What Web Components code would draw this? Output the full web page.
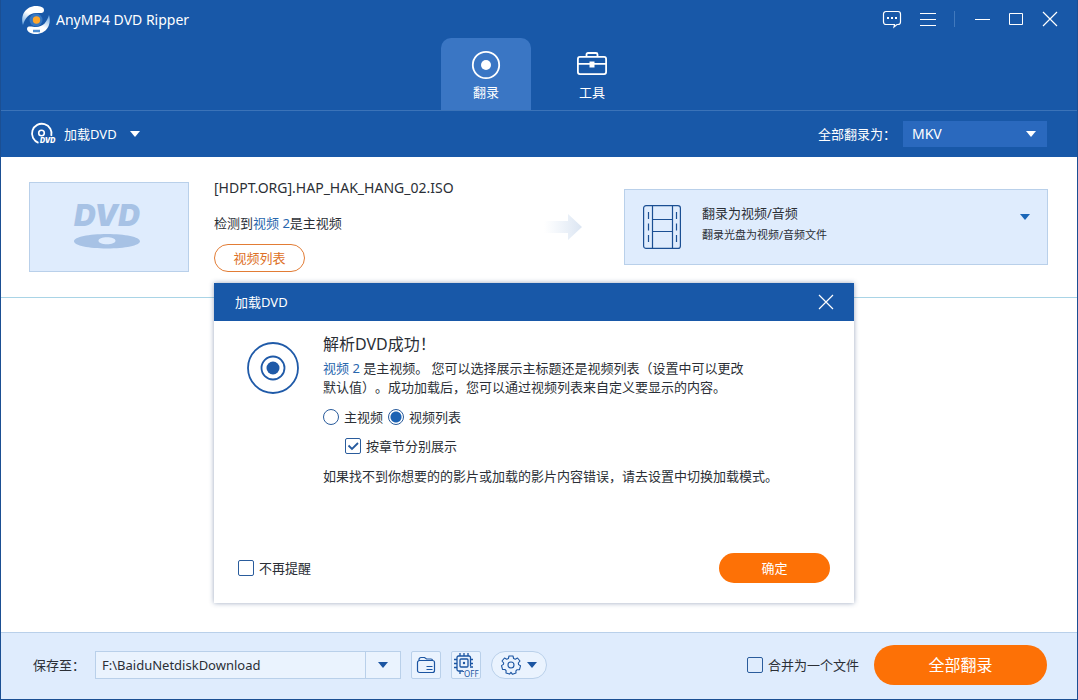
<!DOCTYPE html>
<html lang="zh-CN">
<head>
<meta charset="utf-8">
<meta name="viewport" content="width=device-width, initial-scale=1">
<title>AnyMP4 DVD Ripper</title>
<style>
  :root {
    --brand: #1858a8;
    --ink: #2b2f36;
    --link: #2866ae;
    --accent: #fd7106;
    --panel: #dfecfd;
    --line: #b9d0ea;
  }
  body {
    margin: 0;
    color: var(--ink);
    font: 13px/20px "Noto Sans", "Noto Sans CJK SC", sans-serif;
    text-spacing-trim: space-all;
  }
</style>
</head>
<body>
<app-window></app-window>
<script>
const base = `
  *, *::before, *::after { box-sizing: border-box; }
  :host { box-sizing: border-box; }
  button, input, select { font: inherit; color: inherit; margin: 0; }
  button { padding: 0; border: 0; background: none; display: grid; place-items: center; cursor: pointer; }
  svg { display: block; }
`;

function define(name, css, html) {
  const template = document.createElement('template');
  template.innerHTML = `<style>${base}${css}</style>${html}`;
  customElements.define(name, class extends HTMLElement {
    constructor() {
      super();
      this.attachShadow({ mode: 'open' }).append(template.content.cloneNode(true));
    }
  });
}

const icons = {
  logo: [28, 28, `
    <defs><linearGradient id="a" x1="0" y1="1" x2=".6" y2="0"><stop offset="0" stop-color="#5f9fdf"/><stop offset=".6" stop-color="#fff"/></linearGradient>
    <linearGradient id="b" x1="1" y1="0" x2=".4" y2="1"><stop offset="0" stop-color="#5f9fdf"/><stop offset=".6" stop-color="#fff"/></linearGradient></defs>
    <path d="M1 19C-2 9 4 0 14 0c4 0 8 1 8 4 0 4-4 3-8 3-7 0-11 5-13 12z" fill="url(#a)"/>
    <path d="M27 9c3 10-3 19-13 19-4 0-9-2-9-5 0-4 5-2 9-2 7 0 11-5 13-12z" fill="url(#b)"/>
    <circle cx="14" cy="14" r="6.500" fill="#3677c2"/><circle cx="14.500" cy="14" r="3.700" fill="#ffa62b"/>
    <path d="M11 25h7" stroke="#4c8dd2" stroke-width="2.500"/>`],
  chat: [20, 18, `<path d="M4 1.500h12a2.500 2.500 0 0 1 2.500 2.500v8a2.500 2.500 0 0 1-2.500 2.500h-1l-3 2.500.500-2.500H4A2.500 2.500 0 0 1 1.500 12V4A2.500 2.500 0 0 1 4 1.500z" fill="none" stroke="currentColor" stroke-width="1.200"/><path d="M5 7h2v2H5zm4 0h2v2H9zm4 0h2v2h-2z" fill="currentColor"/>`],
  menu: [16, 14, `<path d="M0 1.500h16M0 7.500h16M0 13.500h16" stroke="currentColor"/>`],
  min: [16, 16, `<path d="M1 8.500h15" stroke="currentColor"/>`],
  max: [16, 16, `<path d="M1.500 2.500h13v11h-13z" fill="none" stroke="currentColor"/>`],
  close: [16, 16, `<path d="M1 1l14 14M15 1L1 15" stroke="currentColor" stroke-width="1.200"/>`],
  ring: [30, 30, `<circle cx="15" cy="15" r="13.200" fill="none" stroke="currentColor" stroke-width="1.800"/><circle cx="15" cy="15" r="5" fill="currentColor"/>`],
  toolbox: [30, 30, `<g fill="none" stroke="currentColor" stroke-width="1.800"><rect x=".9" y="6.900" width="28.200" height="17.200" rx="2"/><path d="M9.500 6.500v-2a1.500 1.500 0 0 1 1.500-1.500h8a1.500 1.500 0 0 1 1.500 1.500v2M1 13.800h28"/></g><path d="M12.500 11.500h5v6h-5z" fill="currentColor"/>`],
  disc: [30, 24, `<path d="M21.300 14A9.800 9.800 0 1 0 8.500 20.800" fill="none" stroke="currentColor" stroke-width="1.800"/><circle cx="11.500" cy="11" r="2.800" fill="none" stroke="currentColor" stroke-width="1.600"/><text x="10" y="21" fill="currentColor" font-size="7" font-weight="900" font-style="italic" font-family="Inter, sans-serif">DVD</text>`],
  down: [10, 6, `<path d="M0 0h10L5 6z" fill="currentColor"/>`],
  cover: [76, 66, `<text x="3" y="32" fill="currentColor" font-size="30" font-weight="900" font-style="italic" font-family="Inter, sans-serif">DVD</text><path fill-rule="evenodd" d="M36 40c18 0 33 3 33 7.300S54 54.500 36 54.500 3 51.600 3 47.300 18 40 36 40zm0 3.200c-4.700 0-8.500 1.500-8.500 3.500s3.800 3.500 8.500 3.500 8.500-1.500 8.500-3.500-3.800-3.500-8.500-3.500z" fill="currentColor"/>`],
  arrow: [40, 28, `<defs><linearGradient id="g"><stop offset="0" stop-color="#dfe9f5" stop-opacity="0"/><stop offset="1" stop-color="#dbe5f2"/></linearGradient></defs><path d="M0 8h24V1l14 13-14 13v-7H0z" fill="url(#g)"/>`],
  film: [38, 44, `<g fill="none" stroke="currentColor" stroke-width="1.200"><rect x=".6" y=".6" width="36.800" height="42.800" rx="2.500"/><path d="M9.500 0v44M29.500 0v44M9.500 14.500h20M9.500 26.500h20"/><path d="M5.500 7v31M33.500 7v31" stroke-dasharray="7 4.500"/></g>`],
  success: [52, 52, `<g fill="none" stroke="currentColor" stroke-width="1.800"><circle cx="26" cy="26" r="25"/><circle cx="26" cy="26" r="11.500"/></g><circle cx="26" cy="26" r="6.500" fill="currentColor"/>`],
  folder: [20, 18, `<g fill="none" stroke="currentColor" stroke-width="1.200"><path d="M3.500 4.500h13a2 2 0 0 1 2 2v8a2 2 0 0 1-2 2h-13a2 2 0 0 1-2-2v-8a2 2 0 0 1 2-2zM3 4.500v-1a2 2 0 0 1 2-2h3.500l2 1.500H15a1.500 1.500 0 0 1 1.500 1.500M10.500 10.500h6M10.500 13.500h6"/></g>`],
  chip: [28, 26, `<g fill="none" stroke="currentColor" stroke-width="1.300"><path d="M18.500 14V5.500a1.500 1.500 0 0 0-1.500-1.500H6.500A1.500 1.500 0 0 0 5 5.500v12A1.500 1.500 0 0 0 6.500 19H11"/><rect x="8" y="7" width="8" height="8" rx="1"/><path d="M8 4V1M12 4V1M16 4V1M5 7.500H2M5 11.500H2M5 15.500H2M18 7.500h3M18 11.500h3M18 15h3M8 19v3M11.500 19v1"/></g><circle cx="12" cy="11" r="1.200" fill="currentColor"/><text x="12" y="25" fill="currentColor" font-size="8" font-family="Noto Sans, sans-serif">OFF</text>`],
  gear: [20, 20, `<g fill="none" stroke="currentColor" stroke-width="1.100"><path stroke-linejoin="round" d="M8 1h4l.6 2.500 1.700.7L16.500 3 19 6l-1.700 2 .3 1.600 1.900 1.200-1 3.800-2.400.1-1.200 1.200.1 2.200-3.500 1.200L10 17.300 8.500 19.100 5 17.900l.1-2.200-1.200-1.200-2.400-.1-1-3.800 1.900-1.200L2.700 8 1 6l2.500-3 2.200 1.200 1.700-.7z"/><circle cx="10" cy="10" r="3"/></g>`]
};

customElements.define('ui-icon', class extends HTMLElement {
  constructor() {
    super();
    this.attachShadow({ mode: 'open' });
  }
  connectedCallback() {
    const [w, h, body] = icons[this.getAttribute('name')];
    this.shadowRoot.innerHTML = `<style>:host{display:block;flex:none}svg{display:block;overflow:visible}</style>
      <svg width="${w}" height="${h}" viewBox="0 0 ${w} ${h}" aria-hidden="true">${body}</svg>`;
  }
});

define('title-bar', `
  :host { display: flex; align-items: center; height: 38px; padding: 0 19px 0 21px; color: #fff; }
  ui-icon[name=logo] { margin-top: 2px; }
  h1 { margin: 2px auto 0 6px; font-size: 14px; font-weight: 400; }
  .group { display: flex; align-items: center; gap: 18px; }
  .window { border-left: 1px solid #4179bd; margin-left: 18px; padding-left: 19px; height: 16px; }
`, `
  <ui-icon name="logo"></ui-icon>
  <h1>AnyMP4 DVD Ripper</h1>
  <div class="group">
    <button aria-label="反馈"><ui-icon name="chat"></ui-icon></button>
    <button aria-label="菜单"><ui-icon name="menu"></ui-icon></button>
  </div>
  <div class="group window">
    <button aria-label="最小化"><ui-icon name="min"></ui-icon></button>
    <button aria-label="最大化"><ui-icon name="max"></ui-icon></button>
    <button aria-label="关闭"><ui-icon name="close"></ui-icon></button>
  </div>
`);

define('nav-tab', `
  :host { display: block; width: 90px; height: 72px; border-radius: 10px 10px 0 0; color: #fff; }
  :host([selected]) { background: #3a76c4; }
  button { width: 100%; height: 100%; align-content: start; gap: 2px; padding-top: 12px; }
`, `<button><slot name="icon"></slot><slot></slot></button>`);

define('tool-bar', `
  :host { display: flex; align-items: center; height: 47px; padding: 0 30px 0 29px; border-top: 1px solid #3b73b8; color: #fff; }
  .load { display: flex; align-items: center; gap: 4px; margin-right: auto; }
  .load .caret { margin-left: 9px; }
  label { margin-right: 7px; }
  .select { display: grid; align-items: center; width: 144px; height: 26px; background: #2a69be; }
  .select > * { grid-area: 1 / 1; }
  select { appearance: none; width: 100%; height: 26px; padding: 0 9px; border: 0; background: none; font-size: 14px; }
  option { color: #222; }
  .select ui-icon { justify-self: end; margin-right: 11px; pointer-events: none; }
`, `
  <button class="load"><ui-icon name="disc"></ui-icon>加载DVD<ui-icon class="caret" name="down"></ui-icon></button>
  <label for="format">全部翻录为：</label>
  <div class="select">
    <select id="format"><option>MKV</option></select>
    <ui-icon name="down"></ui-icon>
  </div>
`);

define('disc-row', `
  :host { display: grid; grid-template-columns: 160px minmax(0, 1fr) 40px 464px; align-items: start;
    min-height: 141px; padding: 0 29px 0 28px; border-bottom: 1px solid #a9d4e6; }
  .cover { display: grid; place-items: center; height: 90px; margin-top: 25px; background: var(--panel);
    border: 1px solid var(--line); color: #a7c2e5; }
  .info { padding: 21px 0 0 25px; }
  .info p { margin: 0 0 15px; white-space: nowrap; }
  .info .name { font-size: 14px; }
  .info .found { margin-bottom: 11px; }
  a { color: var(--link); text-decoration: none; }
  .list { width: 91px; height: 28px; border: 1px solid #e27c35; border-radius: 14px; color: #dd6f26; background: #fff; }
  .arrow { margin-top: 56px; }
  .card { display: flex; align-items: flex-start; height: 76px; margin: 32px 0 0 40px; padding: 15px 17px 0 18px;
    text-align: left; background: var(--panel); border: 1px solid var(--line); color: var(--ink); }
  .card ui-icon[name=film] { color: #1b4f93; }
  .text { display: grid; gap: 2px; margin: -2px auto 0 21px; }
  .text small { font-size: 11px; }
  .card ui-icon[name=down] { margin-top: 9px; color: #1a66b8; }
`, `
  <div class="cover"><ui-icon name="cover"></ui-icon></div>
  <div class="info">
    <p class="name">[HDPT.ORG].HAP_HAK_HANG_02.ISO</p>
    <p class="found">检测到<a href="#main-title">视频 2</a>是主视频</p>
    <button class="list">视频列表</button>
  </div>
  <ui-icon class="arrow" name="arrow"></ui-icon>
  <button class="card">
    <ui-icon name="film"></ui-icon>
    <span class="text"><span>翻录为视频/音频</span><small>翻录光盘为视频/音频文件</small></span>
    <ui-icon name="down"></ui-icon>
  </button>
`);

const choice = `
  label { display: flex; align-items: center; gap: 5px; }
  input[type=checkbox], input[type=radio] { appearance: none; flex: none; width: 16px; height: 16px; border: 1px solid #2a5c9c; border-radius: 2px; }
  input[type=radio] { border-radius: 50%; }
  input[type=radio]:checked { background: radial-gradient(circle, #1c62b3 5px, transparent 6px); }
  input[type=checkbox]:checked { background: url("data:image/svg+xml,%3Csvg xmlns='http://www.w3.org/2000/svg' width='14' height='14'%3E%3Cpath d='M2.500 6.500l3.500 3.500 6-6' fill='none' stroke='%23255a9e' stroke-width='1.800'/%3E%3C/svg%3E") center no-repeat; }
`;

define('load-dialog', `${choice}
  :host { display: flex; flex-direction: column; width: 640px; min-height: 320px; background: #fff; box-shadow: 0 0 5px rgba(30, 60, 110, .45); }
  header { display: flex; align-items: center; justify-content: space-between; height: 38px; padding: 0 20px 0 21px; background: var(--brand); color: #fff; }
  h2, h3 { margin: 0; font-weight: 400; }
  h2 { font-size: 13px; }
  h3 { font-size: 16px; line-height: 22px; }
  .body { display: flex; gap: 24px; padding: 12px 33px 0; }
  .body > ui-icon { margin-top: 9px; color: #1f5aa8; }
  p { margin: 10px 0 0; white-space: nowrap; }
  .lead { margin-top: 4px; line-height: 19px; }
  a { color: var(--link); text-decoration: none; }
  .choices { display: flex; gap: 5px; margin-top: 10px; }
  .chapters { margin: 9px 0 0 22px; }
  footer { display: flex; align-items: center; justify-content: space-between; margin-top: auto; padding: 0 24px 20px; }
  .ok { width: 111px; height: 30px; border-radius: 15px; background: var(--accent); color: #fff; }
`, `
  <header><h2>加载DVD</h2><button aria-label="关闭"><ui-icon name="close"></ui-icon></button></header>
  <div class="body">
    <ui-icon name="success"></ui-icon>
    <div>
      <h3>解析DVD成功！</h3>
      <p class="lead"><a href="#main-title">视频 2</a> 是主视频。 您可以选择展示主标题还是视频列表（设置中可以更改<br>默认值）。成功加载后，您可以通过视频列表来自定义要显示的内容。</p>
      <div class="choices">
        <label><input type="radio" name="mode">主视频</label>
        <label><input type="radio" name="mode" checked>视频列表</label>
      </div>
      <label class="chapters"><input type="checkbox" checked>按章节分别展示</label>
      <p>如果找不到你想要的的影片或加载的影片内容错误，请去设置中切换加载模式。</p>
    </div>
  </div>
  <footer>
    <label><input type="checkbox">不再提醒</label>
    <button class="ok">确定</button>
  </footer>
`);

define('save-bar', `${choice}
  :host { display: flex; align-items: center; gap: 10px; height: 67px; padding: 0 30px 2px 32px; background: var(--panel); border-top: 1px solid var(--line); }
  .path { display: flex; width: 306px; height: 28px; border: 1px solid var(--line); background: #eaf3fe; }
  .path input { flex: 1; min-width: 0; padding: 0 6px; border: 0; background: none; }
  .path button { width: 35px; border-left: 1px solid var(--line); }
  button { color: #1b55a2; }
  .tool { width: 30px; height: 28px; border: 1px solid var(--line); border-radius: 2px; background: #eaf3fe; }
  .pill { display: flex; align-items: center; justify-content: center; gap: 6px; width: 56px; height: 28px; border: 1px solid var(--line); border-radius: 14px; background: #eaf3fe; }
  .merge { margin: 0 5px 0 auto; }
  .go { width: 173px; height: 40px; border-radius: 20px; background: var(--accent); color: #fff; font-size: 16px; }
`, `
  <label for="path">保存至：</label>
  <div class="path"><input id="path" type="text" value="F:\\BaiduNetdiskDownload"><button aria-label="选择路径"><ui-icon name="down"></ui-icon></button></div>
  <button class="tool" aria-label="打开文件夹"><ui-icon name="folder"></ui-icon></button>
  <button class="tool" aria-label="硬件加速"><ui-icon name="chip"></ui-icon></button>
  <button class="pill" aria-label="设置"><ui-icon name="gear"></ui-icon><ui-icon name="down"></ui-icon></button>
  <label class="merge"><input type="checkbox">合并为一个文件</label>
  <button class="go">全部翻录</button>
`);

define('app-window', `
  :host { position: relative; display: flex; flex-direction: column; min-height: 100vh; background: #fff; border: 1px solid #1b4f93; border-top: 0; }
  .top { background: var(--brand); }
  nav { display: flex; justify-content: center; gap: 16px; }
  main { flex: 1; }
  .overlay { position: absolute; inset: 0; display: flex; justify-content: center; align-items: flex-start; padding: 283px 10px 0 0; pointer-events: none; }
  load-dialog { pointer-events: auto; }
`, `
  <div class="top">
    <title-bar></title-bar>
    <nav>
      <nav-tab selected><ui-icon slot="icon" name="ring"></ui-icon>翻录</nav-tab>
      <nav-tab><ui-icon slot="icon" name="toolbox"></ui-icon>工具</nav-tab>
    </nav>
    <tool-bar></tool-bar>
  </div>
  <main><disc-row></disc-row></main>
  <save-bar></save-bar>
  <div class="overlay"><load-dialog></load-dialog></div>
`);
</script>
</body>
</html>
